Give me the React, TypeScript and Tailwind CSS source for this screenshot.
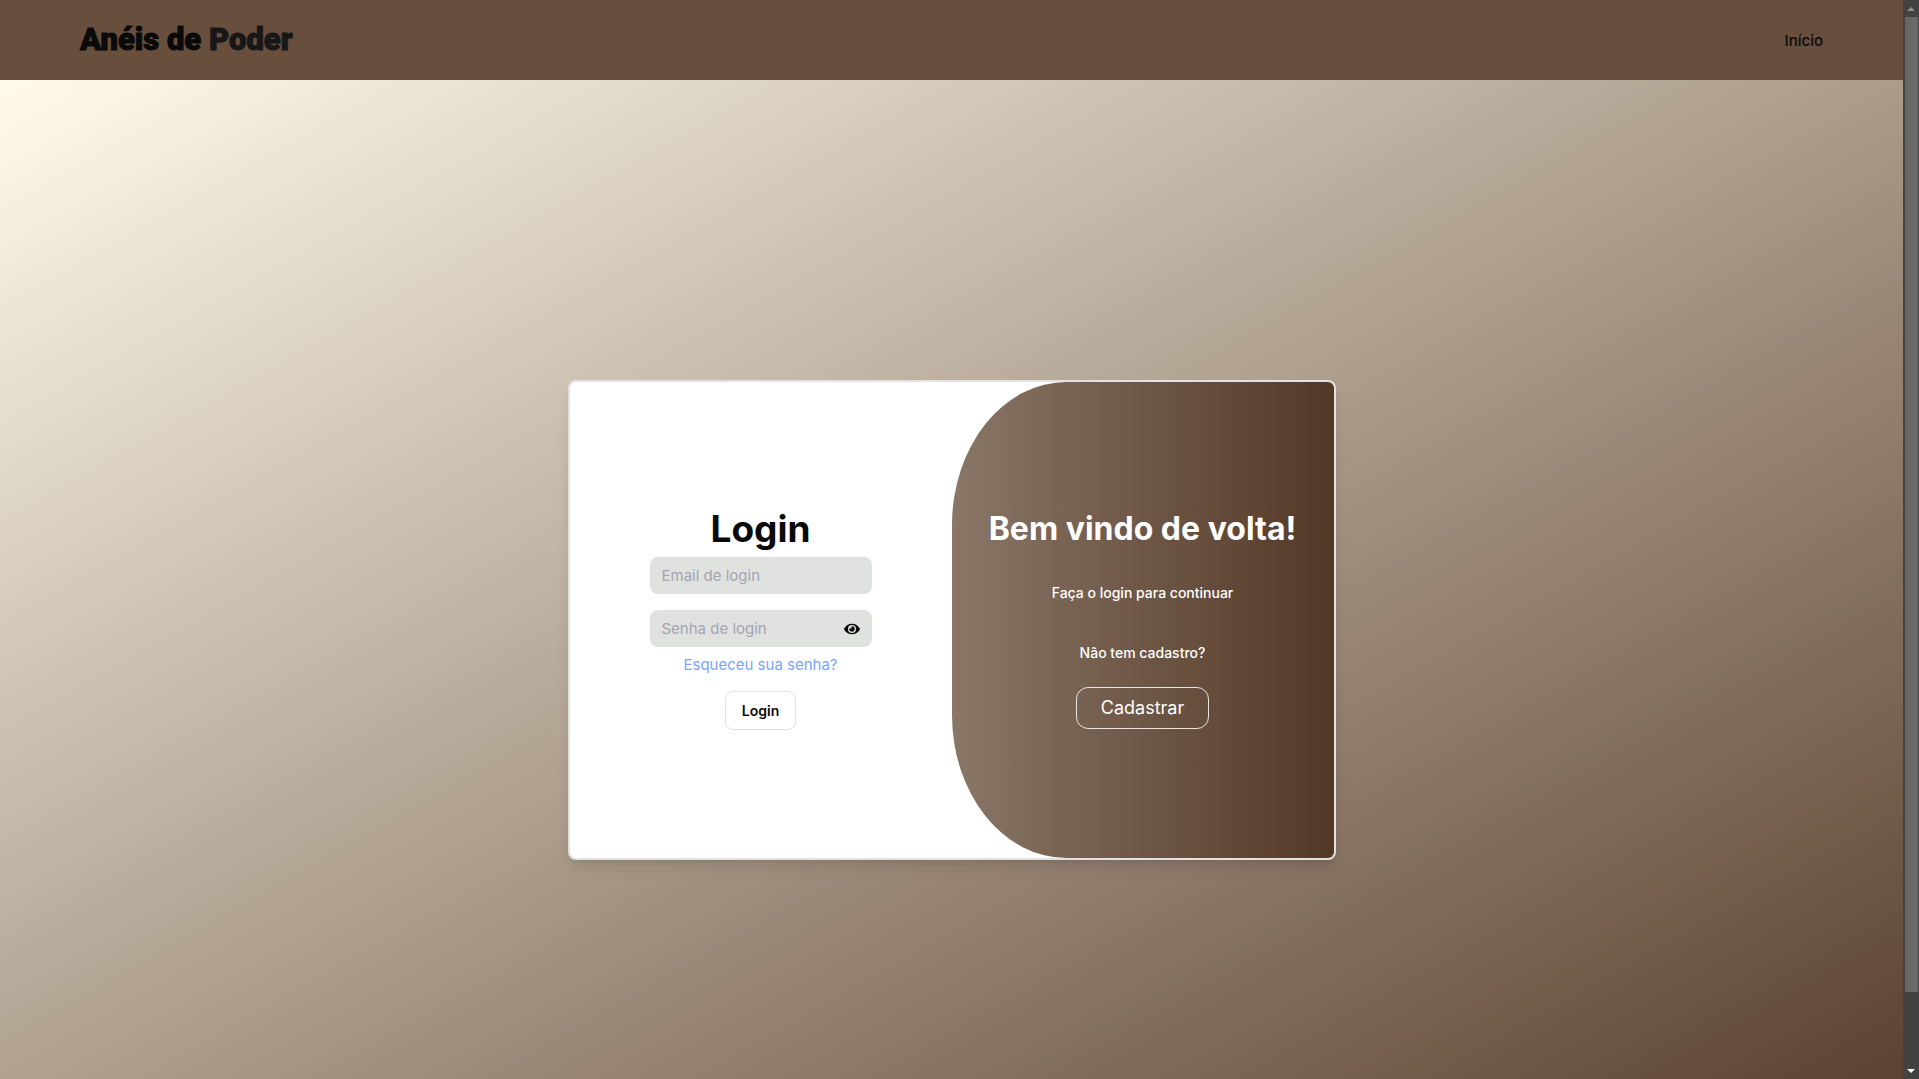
import { useState } from "react";
import { FaEye } from "react-icons/fa";

function Header() {
  return (
    <header className="flex h-20 shrink-0 items-center justify-between bg-[#684e3c] px-20">
      <a
        href="#"
        className="font-['Roboto',sans-serif] text-[31px] font-black text-[#0a0a0a] [-webkit-text-stroke:1px]"
      >
        Anéis de <span className="text-[#171717]">Poder</span>
      </a>
      <nav>
        <a href="#" className="text-[15px] font-medium text-[#0a0a0a]">
          Início
        </a>
      </nav>
    </header>
  );
}

function LoginForm() {
  const [visible, setVisible] = useState(false);
  return (
    <form
      className="flex w-1/2 flex-col items-center justify-center"
      onSubmit={(e) => e.preventDefault()}
    >
      <h1 className="text-[37px] leading-10 font-bold text-[#0a0a0a]">Login</h1>
      <input
        type="email"
        aria-label="Email de login"
        placeholder="Email de login"
        className="mt-2 h-[37px] w-[222px] rounded-lg bg-[#e0e2e0] px-3 text-[15px] outline-none placeholder:text-[#a3a5b3]"
      />
      <div className="relative mt-4 w-[222px]">
        <input
          type={visible ? "text" : "password"}
          aria-label="Senha de login"
          placeholder="Senha de login"
          className="block h-[37px] w-full rounded-lg bg-[#e0e2e0] pr-10 pl-3 text-[15px] outline-none placeholder:text-[#a3a5b3]"
        />
        <button
          type="button"
          aria-label="Mostrar senha"
          onClick={() => setVisible(!visible)}
          className="absolute inset-y-0 right-3 flex items-center text-[#0a0a0a]"
        >
          <FaEye size={16} />
        </button>
      </div>
      <a href="#" className="mt-2 text-[15px] leading-5 text-[#7ba5fb]">
        Esqueceu sua senha?
      </a>
      <button
        type="submit"
        className="mt-4 rounded-lg border border-[#e2e2e4] px-4 py-2 text-sm leading-[21px] font-semibold text-[#0a0a0a]"
      >
        Login
      </button>
    </form>
  );
}

function WelcomePanel() {
  return (
    <section className="flex w-1/2 flex-col items-center justify-center rounded-l-[30%] bg-linear-to-r from-[#897767] to-[#543827] text-white">
      <h2 className="text-[32px] leading-9 font-bold">Bem vindo de volta!</h2>
      <p className="mt-9 text-sm leading-5 font-medium">
        Faça o login para continuar
      </p>
      <p className="mt-10 text-sm leading-5 font-medium">Não tem cadastro?</p>
      <button
        type="button"
        className="mt-6 rounded-xl border border-[#e5e5e5] px-6 py-2 text-lg leading-6"
      >
        Cadastrar
      </button>
    </section>
  );
}

function Scrollbar() {
  return (
    <div
      aria-hidden="true"
      className="flex w-4 shrink-0 flex-col bg-[#424242]"
    >
      <div className="flex h-[17px] items-center justify-center">
        <svg width="8" height="4" viewBox="0 0 8 4" fill="#929292">
          <path d="M4 0 8 4H0z" />
        </svg>
      </div>
      <div className="mr-px ml-0.5 flex-14 bg-[#686868]" />
      <div className="flex-1" />
      <div className="flex h-[17px] items-center justify-center">
        <svg width="8" height="4" viewBox="0 0 8 4" fill="#ffffff">
          <path d="M0 0h8L4 4z" />
        </svg>
      </div>
    </div>
  );
}

export default function App() {
  return (
    <div className="flex h-screen overflow-hidden font-['Inter',sans-serif]">
      <div className="flex min-w-0 flex-1 flex-col overflow-hidden">
        <Header />
        <main className="flex h-screen shrink-0 items-center justify-center bg-[linear-gradient(to_bottom_right,#fffbeb,#563b29)]">
          <div className="flex h-[480px] w-full max-w-3xl overflow-hidden rounded-lg border-2 border-[#e2e2e2] bg-white shadow-lg">
            <LoginForm />
            <WelcomePanel />
          </div>
        </main>
      </div>
      <Scrollbar />
    </div>
  );
}
